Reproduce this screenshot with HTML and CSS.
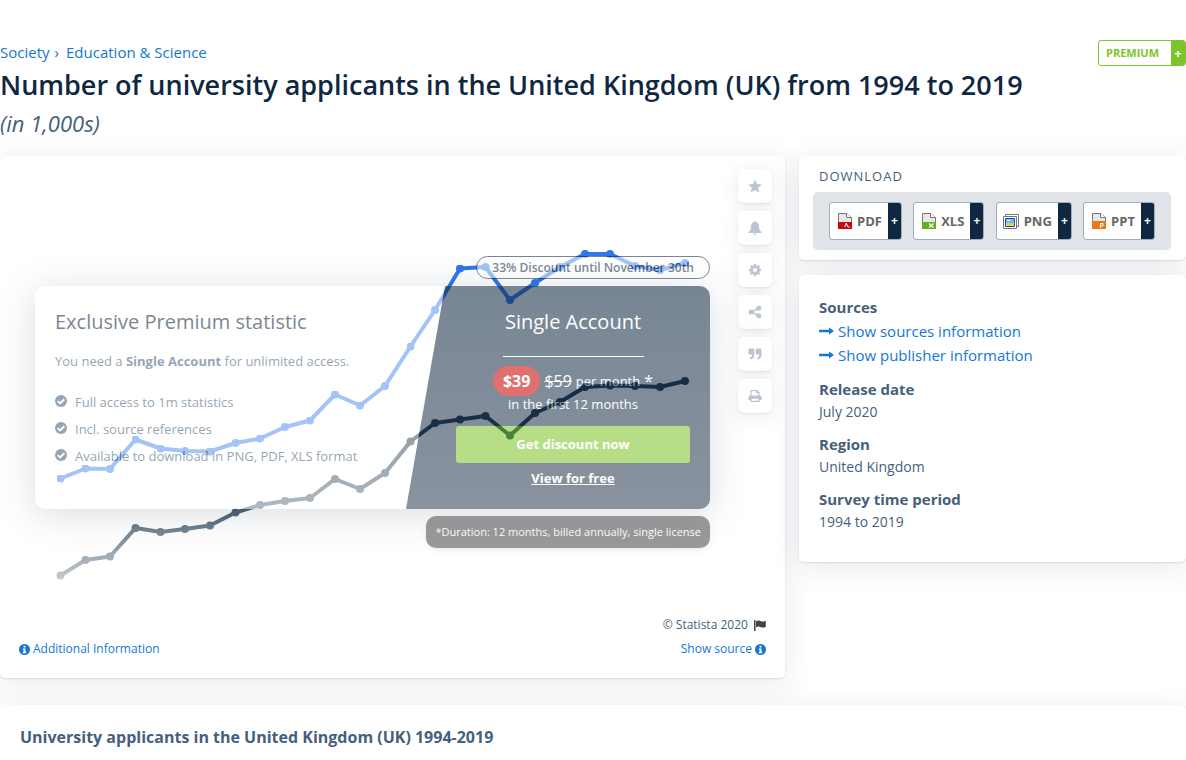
FILE: index.html
```html
<!DOCTYPE html>
<html lang="en">
<head>
<meta charset="utf-8">
<title>Number of university applicants in the United Kingdom (UK)</title>
<link rel="stylesheet" href="styles.css">
</head>
<body>
<svg class="defs" aria-hidden="true">
  <symbol id="check" viewBox="0 0 12 12"><circle cx="6" cy="6" r="6"/><path d="M2.8 6.1 5.1 8.4 9.3 4.2" fill="none" stroke="#fff" stroke-width="2"/></symbol>
  <symbol id="info" viewBox="0 0 12 12"><circle cx="6" cy="6" r="6"/><path d="M5 2h2v1.8H5zM4.2 4.8H7v3.7h.9V10H4.1V8.5H5V6.2h-.8z" fill="#fff"/></symbol>
  <symbol id="arrow" viewBox="0 0 15 8"><path d="M0 2.800h10V.4L15 4l-5 3.600V5.200H0z"/></symbol>
</svg>
<header class="header">
  <div class="topline">
    <nav class="crumbs" aria-label="Breadcrumb"><a href="#">Society</a><span class="sep">›</span><a href="#">Education &amp; Science</a></nav>
    <button class="premium" type="button"><span class="premium-label">PREMIUM</span><span class="premium-plus">+</span></button>
  </div>
  <h1 class="title">Number of university applicants in the United Kingdom (UK) from 1994 to 2019</h1>
  <p class="subtitle">(in 1,000s)</p>
</header>
<main class="layout">
  <section class="card chart-card">
    <div class="chart-row">
      <div class="chart-area">
        <svg class="chart" viewBox="0 156 725 457" role="img" aria-label="Line chart of applicants">
          <defs>
            <linearGradient id="fade" gradientUnits="userSpaceOnUse" x1="0" y1="440" x2="0" y2="590">
              <stop offset="0" stop-color="#0f2741"/><stop offset=".48" stop-color="#4d6377"/><stop offset=".59" stop-color="#6f8090"/><stop offset=".78" stop-color="#a3adb6"/><stop offset="1" stop-color="#d5d9dd"/>
            </linearGradient>
            <marker id="dot-blue" markerUnits="userSpaceOnUse" markerWidth="8" markerHeight="8" refX="4" refY="4"><circle cx="4" cy="4" r="4" fill="#2f78eb"/></marker>
          </defs>
          <polyline class="series series-blue" points="60.500,478.5 85.5,468.5 110,469 135.5,439.5 160.5,448.5 185,451 210,451.5 235.5,443 260,438.5 285,427 310,420.5 335,394.5 360,405.5 385,386 410.5,346.5 435,310 460,268.5 485.5,267 510,300 535,283 560,267 585,254 610,254 635,266 660,270 685,263"/>
          <path class="dots" stroke="url(#fade)" d="M60.500 575.5h.01M85.5 560h.01M110 556.5h.01M135.5 528h.01M160.5 532h.01M185 529h.01M210 525.5h.01M235.5 512.5h.01M260 505h.01M285 501h.01M310 498h.01M335 479h.01M360 489h.01M385 473h.01M410.5 441.5h.01M435 423h.01M460 419.5h.01M485.5 416h.01M510 435.5h.01M535 413h.01M560 402h.01M585 387h.01M610 385.5h.01M635 386h.01M660 387h.01M685 381h.01"/>
          <polyline class="series" stroke="url(#fade)" points="60.500,575.5 85.5,560 110,556.5 135.5,528 160.5,532 185,529 210,525.5 235.5,512.5 260,505 285,501 310,498 335,479 360,489 385,473 410.5,441.5 435,423 460,419.5 485.5,416 510,435.5 535,413 560,402 585,387 610,385.5 635,386 660,387 685,381"/>
        </svg>
        <div class="overlay">
          <p class="discount">33% Discount until November 30th</p>
          <div class="offer">
            <div class="offer-info">
              <h2 class="offer-title">Exclusive Premium statistic</h2>
              <p class="offer-text">You need a <b>Single Account</b> for unlimited access.</p>
              <ul class="offer-list">
                <li><svg class="check"><use href="#check"/></svg>Full access to 1m statistics</li>
                <li><svg class="check"><use href="#check"/></svg>Incl. source references</li>
                <li><svg class="check"><use href="#check"/></svg>Available to download in PNG, PDF, XLS format</li>
              </ul>
            </div>
            <div class="plan">
              <h2 class="plan-title">Single Account</h2>
              <hr class="plan-rule">
              <p class="price"><span class="price-new">$39</span><s>$59</s><span class="per">per month</span>*</p>
              <p class="term">in the first 12 months</p>
              <button class="buy" type="button">Get discount now</button>
              <a class="free" href="#">View for free</a>
            </div>
          </div>
          <p class="duration">*Duration: 12 months, billed annually, single license</p>
        </div>
      </div>
      <div class="tools">
        <button class="tool" type="button" aria-label="Favorite"><svg viewBox="0 0 14 14"><path d="M7 .4 9 4.9l4.8.5-3.6 3.3 1 4.9L7 11.1l-4.2 2.5 1-4.9L.2 5.4 5 4.9z"/></svg></button>
        <button class="tool" type="button" aria-label="Alerts"><svg viewBox="0 0 14 14"><path d="M6.2 1V.6q.8-.8 1.6 0V1C10 1.4 11 3 11 5.3c0 3.200.8 4.700 2.600 5.700v1H.4v-1C2.200 10 3 8.500 3 5.300 3 3 4 1.400 6.200 1zM5.400 12.500h3.200C8.300 14.300 5.700 14.300 5.400 12.500z"/></svg></button>
        <button class="tool" type="button" aria-label="Settings"><svg viewBox="0 0 14 14"><path fill-rule="evenodd" d="M6 1h2l.3 1.500 1.100.5 1.300-.9 1.400 1.400-.9 1.300.5 1.100 1.500.3v1.800l-1.500.3-.5 1.100.9 1.300-1.400 1.400-1.300-.9-1.100.5L8 13.200H6l-.3-1.500-1.100-.5-1.300.9-1.400-1.400.9-1.300-.5-1.100L.8 8V6.200l1.600-.3.5-1.100L2 3.500l1.400-1.400 1.200.9 1.100-.5zM7 5a2.100 2.100 0 1 0 0 4.200A2.100 2.100 0 0 0 7 5z"/></svg></button>
        <button class="tool" type="button" aria-label="Share"><svg viewBox="0 0 14 14"><path d="M11 3.200 3 7l8 3.800" fill="none" stroke="#bbc4d1" stroke-width="1.500"/><circle cx="3" cy="7" r="2.500"/><circle cx="10.800" cy="3.200" r="2.500"/><circle cx="10.800" cy="10.800" r="2.500"/></svg></button>
        <button class="tool" type="button" aria-label="Cite"><svg viewBox="0 0 14 14"><path d="M1.800 1.500H5q1.300 0 1.300 1.300v4.700q0 4.500-4.300 5v-1.700q2.100-.5 2.100-3.200H1.800Q.5 7.600.5 6.300V2.800q0-1.300 1.300-1.300zM9 1.500h3.200q1.300 0 1.300 1.300v4.700q0 4.500-4.300 5v-1.700q2.100-.5 2.100-3.200H9q-1.300 0-1.300-1.300V2.800Q7.700 1.500 9 1.500z"/></svg></button>
        <button class="tool" type="button" aria-label="Print"><svg viewBox="0 0 14 14"><path fill-rule="evenodd" d="M2.400 1h6.800l2.400 2.400v3.200q2 .2 2 2V11h-2v2H2.400v-2h-2V8.600q0-1.800 2-2zM3.600 2.200v4.400h6.800V4.200H8.200v-2zM3.600 9.800v2h6.800v-2z"/></svg></button>
      </div>
    </div>
    <footer class="chart-foot">
      <p class="copyright">© Statista 2020 <svg class="flag" viewBox="0 0 12 11"><path d="M0 0h1.500v11H0zM2 1.200q2.500-1.400 5 0 2 1 4.800-.5v6q-2.800 1.600-5.300.4Q4 6 2 7.400z"/></svg></p>
      <div class="foot-links">
        <a href="#"><svg class="info"><use href="#info"/></svg>Additional Information</a>
        <a href="#">Show source<svg class="info"><use href="#info"/></svg></a>
      </div>
    </footer>
  </section>
  <aside class="side">
    <section class="card download">
      <h2 class="download-title">DOWNLOAD</h2>
      <div class="formats">
        <button class="format" type="button"><span class="format-main"><svg class="file" viewBox="0 0 14 16"><path d="M.5 9V.5h8l5 4V9" fill="#e8e8ea" stroke="#777"/><path d="M8.500.5v4h5" fill="#fff" stroke="#777"/><path d="M0 9h14v7H0z" fill="#c20d10"/><path d="m6.500 14 2-3.500 1 3 2 .7M8 10v2" fill="none" stroke="#fff"/></svg>PDF</span><span class="format-plus">+</span></button>
        <button class="format" type="button"><span class="format-main"><svg class="file" viewBox="0 0 14 16"><path d="M.5 9V.5h8l5 4V9" fill="#e8e8ea" stroke="#777"/><path d="M8.500.5v4h5" fill="#fff" stroke="#777"/><path d="M0 9h14v7H0z" fill="#62b022"/><path d="m7 10.500 4.500 4m0-4-4.500 4" fill="none" stroke="#fff" stroke-width="1.300"/></svg>XLS</span><span class="format-plus">+</span></button>
        <button class="format" type="button"><span class="format-main format-image"><svg class="image" viewBox="0 0 16 15"><path d="M2.500.5h13v12h-13z" fill="#fff" stroke="#777"/><path d="M.5 2.500h13v12H.5z" fill="#fff" stroke="#777"/><path d="M2.500 4.500h9v8h-9z" fill="#69b9f3" stroke="#1c4fae"/><path d="M3 9q2-1 4 0t4-1v4H3z" fill="#f1ca52"/><path d="M4 7q1-2 2.500-1T9 7z" fill="#fff"/></svg>PNG</span><span class="format-plus">+</span></button>
        <button class="format" type="button"><span class="format-main"><svg class="file" viewBox="0 0 14 16"><path d="M.5 9V.5h8l5 4V9" fill="#e8e8ea" stroke="#777"/><path d="M8.500.5v4h5" fill="#fff" stroke="#777"/><path d="M0 8h14v8H0z" fill="#e97a1b"/><path d="M8.500 15v-4.500H11v2.300H8.500" fill="none" stroke="#fff"/></svg>PPT</span><span class="format-plus">+</span></button>
      </div>
    </section>
    <section class="card facts">
      <div class="fact"><h3>Sources</h3>
        <a href="#"><svg class="arrow"><use href="#arrow"/></svg>Show sources information</a>
        <a href="#"><svg class="arrow"><use href="#arrow"/></svg>Show publisher information</a></div>
      <div class="fact"><h3>Release date</h3><p>July 2020</p></div>
      <div class="fact"><h3>Region</h3><p>United Kingdom</p></div>
      <div class="fact"><h3>Survey time period</h3><p>1994 to 2019</p></div>
    </section>
  </aside>
</main>
<section class="card description"><h2>University applicants in the United Kingdom (UK) 1994-2019</h2></section>
</body>
</html>
```

FILE: styles.css
```css
* { box-sizing: border-box; }
body { margin: 0; padding-top: 40px; background: #fff; color: #455f7c; font: 13px/20px "Open Sans", "Noto Sans", sans-serif; overflow-x: hidden; }
h1, h2, h3, p, ul { margin: 0; padding: 0; }
a { color: #1477d4; text-decoration: none; }
button { font: inherit; margin: 0; padding: 0; border: 0; cursor: pointer; }
.defs { position: absolute; width: 0; height: 0; }
.card { background: #fff; border-radius: 5px; box-shadow: 0 1px 2px rgba(15, 39, 65, .12), 0 5px 30px rgba(15, 39, 65, .1); }

.topline { display: flex; justify-content: space-between; align-items: flex-start; height: 27px; }
.crumbs { font-size: 15px; line-height: 24px; }
.sep { margin: 0 7px 0 5px; }
.premium { display: flex; height: 26px; border: 1px solid #7dc62a; border-radius: 3px; background: #fff; font-size: 11px; font-weight: 700; line-height: 24px; overflow: hidden; }
.premium-label { padding: 0 12px 0 7px; color: #7dc62a; }
.premium-plus { width: 14px; background: #7dc62a; color: #fff; font-size: 13px; }
.title { color: #0f2741; font-size: 27px; font-weight: 600; line-height: 36px; }
.subtitle { padding: 5px 0 17px; font-size: 22px; font-style: italic; line-height: 31px; }

.layout { display: grid; grid-template-columns: minmax(0, 785fr) minmax(0, 387fr); gap: 14px; align-items: start; }
.chart-row { display: flex; gap: 13px; padding-right: 13px; }
.chart-area { position: relative; flex: 1; min-width: 0; }
.chart { display: block; width: 100%; }
.series { fill: none; stroke-width: 4; stroke-linejoin: round; stroke-linecap: round; }
.series-blue { stroke: #2f78eb; marker-start: url(#dot-blue); marker-mid: url(#dot-blue); marker-end: url(#dot-blue); }
.dots { stroke-width: 8; stroke-linecap: round; }

.overlay { position: absolute; top: 100px; left: 35px; right: 15px; display: flex; flex-direction: column; align-items: flex-end; gap: 7px; opacity: .56; }
.discount { padding: 0 15px; border: 1px solid #0f2741; border-radius: 12px; background: #fff; color: #0f2741; font-size: 12px; font-weight: 600; line-height: 21px; }
.offer { position: relative; display: flex; align-self: stretch; height: 223px; padding: 0 20px; border-radius: 10px; background: #fff; box-shadow: 0 5px 35px rgba(15, 39, 65, .28); }
.offer::before { content: ""; position: absolute; top: 0; right: 0; bottom: 0; width: 304px; border-radius: 0 10px 10px 0; background: linear-gradient(#0f2741, #2e4056); clip-path: polygon(39px 0, 100% 0, 100% 100%, 0 100%); }
.offer-info { flex: 1; padding-top: 20px; }
.offer-title, .plan-title { font-size: 20px; font-weight: 400; line-height: 32px; }
.offer-title { color: #0f2741; }
.offer-text { padding: 13px 0 18px; }
.offer-list { list-style: none; line-height: 27px; }
.offer-list li { display: flex; gap: 8px; }
.check { width: 12px; height: 12px; margin-top: 6px; fill: #455f7c; }
.plan { position: relative; width: 234px; padding-top: 20px; color: #fff; text-align: center; }
.plan-rule { width: 141px; margin: 18px auto 8px; border: 0; border-top: 1px solid #fff; }
.price { display: flex; justify-content: center; align-items: center; gap: 4px; height: 31px; font-size: 16px; }
.price-new { padding: 0 10px; border-radius: 15px; background: #c80000; font-weight: 700; line-height: 30px; }
.per { font-size: 13px; }
.term { line-height: 16px; }
.buy { display: block; width: 100%; height: 37px; margin: 14px 0 5px; padding-bottom: 2px; border-radius: 3px; background: #7dc62a; color: #fff; font-weight: 700; }
.free { color: #fff; font-weight: 700; text-decoration: underline; }
.duration { padding: 0 9px; border-radius: 10px; background: #494949; color: #fff; font-size: 11px; line-height: 32px; box-shadow: 0 2px 5px rgba(15, 39, 65, .15); }

.tools { display: flex; flex-direction: column; gap: 8px; padding-top: 13px; }
.tool { display: grid; place-items: center; width: 34px; height: 34px; border-radius: 5px; background: #fff; box-shadow: 0 1px 2px rgba(15, 39, 65, .08), 0 3px 20px rgba(15, 39, 65, .09); }
.tool svg { width: 14px; height: 14px; fill: #bbc4d1; }
.chart-foot { padding: 0 19px 17px; font-size: 12px; line-height: 24px; }
.copyright { text-align: right; }
.flag { width: 12px; height: 11px; margin-left: 3px; vertical-align: -2px; fill: #444; }
.foot-links { display: flex; justify-content: space-between; }
.foot-links a { display: flex; align-items: center; gap: 3px; }
.info { width: 11px; height: 11px; fill: #1477d4; }

.side { display: grid; gap: 15px; }
.download { padding: 10px 15px 10px 14px; }
.download-title { padding: 0 6px 6px; font-size: 13px; font-weight: 500; line-height: 20px; letter-spacing: 1px; }
.formats { display: flex; justify-content: space-between; padding: 10px 16px; border-radius: 5px; background: #e0e3e8; }
.format { display: flex; height: 38px; border: 1px solid #a0acbf; border-radius: 3px; background: #fff; color: #666; font-weight: 700; overflow: hidden; }
.format-main { display: flex; align-items: center; gap: 5px; height: 36px; padding: 0 6px 0 8px; }
.format-image { padding-left: 6px; }
.file { width: 14px; height: 16px; }
.image { width: 16px; height: 15px; }
.format-plus { width: 13px; background: #0f2741; color: #fff; font-size: 12px; line-height: 36px; }
.facts { display: grid; gap: 10px; padding: 20px 20px 30px; }
.fact h3 { font-size: 15px; font-weight: 700; line-height: 24px; }
.fact a { display: flex; align-items: center; gap: 4px; font-size: 15px; line-height: 24px; }
.fact p { font-size: 14px; line-height: 21px; }
.arrow { width: 15px; height: 8px; fill: #1477d4; }
.description { margin-top: 27px; padding: 20px 20px 40px; }
.description h2 { font-size: 16px; line-height: 24px; }
```
